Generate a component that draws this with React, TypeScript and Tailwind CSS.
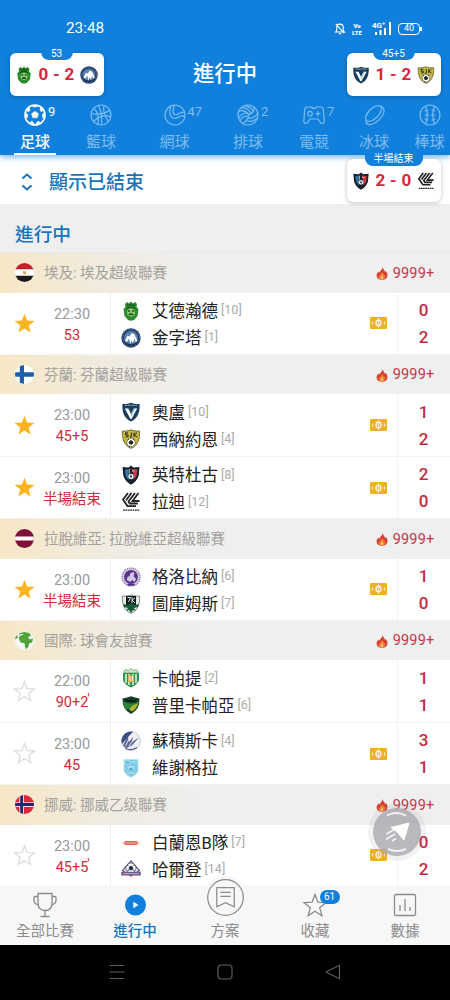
import React from 'react';

const STAR = 'M12 1.8l2.7 7.1 7.6.4-5.9 4.8 2 7.3-6.4-4.2-6.4 4.2 2-7.3L1.7 9.3l7.6-.4z';
const SHIELD = 'M10 .8 C7.5 2 4 2.2 1.4 2 C1 10 3 16.500 10 19.400 C17 16.500 19 10 18.600 2 C16 2.200 12.500 2 10 .8Z';

const crests: Record<string, React.ReactNode> = {
  eid: (
    <>
      <path d="M4 3l2-2 2 1.500L10 .6l2 1.900L14 1l2 2-.5 3 2 2-1 7-3.500 4-3 .7-3-.7L3.500 15l-1-7 2-2z" fill="#2b8a2a" />
      <path d="M6 4h8M5.500 7.500q4.500-3 9 0" stroke="#0f5216" strokeWidth="1.200" fill="none" />
      <circle cx="10" cy="11.500" r="4" fill="#8fc670" />
      <path d="M7 10h2M11 10h2M7.800 14q2.200-2 4.400 0" stroke="#14541a" strokeWidth="1.400" />
    </>
  ),
  pyramids: (
    <>
      <circle cx="10" cy="10" r="9.700" fill="#1f3a68" />
      <circle cx="10" cy="10" r="7" fill="#5f81ad" />
      <path d="M4 13L6.500 7.500l1.800 1L11 5l2.500 1.500L16 12v1.500h-1.700l-.8-3-1.500 4.500-1.500-2.500-1.200 3.500-1.300-5.500-2 3.500z" fill="#fff" />
      <path d="M3.500 13.500q6.500 5 13 0l-1 3-5.500 2.500-5.500-2.500z" fill="#1a3158" />
      <circle cx="10" cy="10" r="8.400" fill="none" stroke="#93a9c6" strokeWidth=".7" strokeDasharray="1 1" />
    </>
  ),
  oulu: (
    <>
      <path d={SHIELD} fill="#1b3d5c" />
      <path d="M4 3.400h12" stroke="#7d9bb0" strokeWidth="1.400" strokeDasharray="2 .6" />
      <path d="M3.800 6.500h3.500L10 12l2.700-5.500h3.500L10.500 17h-1z" fill="#fff" />
      <path d="M10 12l2.700-5.500h1.300L10 15z" fill="#6fb1c4" />
    </>
  ),
  sjk: (
    <>
      <path d={SHIELD} fill="#c3b73f" stroke="#58572d" strokeWidth=".8" />
      <path d="M7 3.800H4.500v2H7v2H4.500M10.300 3.500V8H8.800M13 3.500V8M16 3.700l-2.700 2L16 8" stroke="#24241c" strokeWidth="1" fill="none" />
      <circle cx="10" cy="13.500" r="4.200" fill="#fff" stroke="#333" strokeWidth=".5" />
      <path d="M10 11.500l2 1.500-.8 2H8.800L8 13zM6.500 11l1.500-1M13.500 11L12 10M8 17l1 .7" fill="#222" stroke="#222" strokeWidth=".9" />
    </>
  ),
  inter: (
    <>
      <path d="M10 .5L12.500 2.500l6-.5-.8 8.500Q16 16.500 10 19.700 4 16.500 2.300 10.500L1.500 2l6 .5z" fill="#17202b" />
      <path d="M3.800 4.800l3.700-.6v11l-2.700-4z" fill="#2f78ad" />
      <path d="M10.500 4l5.900.6-.9 6.400-3 4V9z" fill="#d03c42" />
      <path d="M8.300 4v4.500M11 6h2.500" stroke="#e9e9e9" strokeWidth=".8" fill="none" />
      <circle cx="10" cy="11.500" r="2.700" fill="#d5e6ee" />
      <path d="M9 10.500h2l-.3 1.900H9.300z" fill="#1c2631" />
    </>
  ),
  lahti: (
    <>
      <g stroke="#222" strokeWidth="1.800" fill="none">
        <path d="M7 1L2 7.500l4.500 6.600H15" />
        <path d="M10.500 1L5 8.300" />
        <path d="M14 1L7.500 9.500l1.300 2h8" />
        <path d="M17.500 1l-6 8h7" />
      </g>
      <path d="M2 18.200h16.500" stroke="#222" strokeWidth="1.300" strokeDasharray="1.800 .6" />
    </>
  ),
  grobina: (
    <>
      <circle cx="10" cy="10" r="9" fill="#d5cce2" stroke="#8468a8" strokeWidth="1.200" strokeDasharray="1.200 .8" />
      <circle cx="10" cy="10" r="6.900" fill="#57318a" />
      <path d="M5.500 13l1-3 2-1 1-3 3-1 1 2-1 2 2.500 3-1.500 3-2.500-2-1.500 2z" fill="#d5c8e4" />
      <path d="M6.500 17.800h7" stroke="#57318a" strokeWidth="1.800" />
    </>
  ),
  tukums: (
    <>
      <path d={SHIELD} fill="#e4ece7" stroke="#51665b" strokeWidth=".7" />
      <path d="M5 2h10v9.500H5z" fill="#111c17" />
      <path d="M6.500 3.500h3L7.500 8M11 3v6M14 4l-3 2 3 3" stroke="#d9e3dd" strokeWidth="1" fill="none" />
      <path d="M2 10l4 1 4-2 4 2 4-1-1 3-4 1 2 3-3-1-2 3-2-3-3 1 2-3-4-1z" fill="#175b3c" />
    </>
  ),
  karpaty: (
    <>
      <path d="M3 3l2-1.500L7.500 2.500 10 .5l2.500 2L15 1.500 17 3v2H3z" fill="#cfe3c3" stroke="#5c9d5b" strokeWidth=".7" />
      <path d="M2 5h16v7q-1.500 5-8 7.500Q3.500 17 2 12z" fill="#2d9453" />
      <path d="M5 6v9M8 6v11M12 6v11M15 6v9" stroke="#f2f4e4" strokeWidth="1.500" />
      <path d="M7.300 7h5.500v7H7.300z" fill="#e3a735" />
      <path d="M9 8v5M11.500 8v5" stroke="#fff" strokeWidth=".9" />
    </>
  ),
  prykarpattia: (
    <>
      <path d="M1.500 3.500Q6 2.500 10 1.200 14 2.500 18.500 3.500 19 14.500 10 19 1 14.500 1.500 3.500z" fill="#12402a" />
      <path d="M2 6q8 5 16 0l-.5 3q-7 3-12 6Q2 11 2 6z" fill="#2f7f34" />
      <path d="M8 14.500q3-5 9-6-1 5-6 8z" fill="#a9b92f" />
      <path d="M4 5.500l12 .5" stroke="#0c2417" strokeWidth="2.200" />
    </>
  ),
  suceska: (
    <>
      <circle cx="10" cy="10" r="9.500" fill="#eef0f4" stroke="#a9b0c3" strokeWidth=".6" />
      <path d="M12 .8A9.500 9.500 0 0 0 1 13L8 5z" fill="#3b4a83" />
      <path d="M2 14.500L7 5l1 6 4-5-1 5 7-4.500-6 7.500-7 3z" fill="#56648f" />
      <path d="M4.500 15l4.500-9M8 15l5-7M11 14.500l6-6" stroke="#fff" strokeWidth=".9" />
      <path d="M4 17q6 3.500 12-.5" stroke="#56648f" strokeWidth="1.200" fill="none" />
    </>
  ),
  visegrad: (
    <>
      <path d="M3 1.500h14V13q-2 4.500-7 6.300Q5 17.500 3 13z" fill="#7ecbe6" stroke="#b5e3f2" strokeWidth=".8" />
      <path d="M4 3h5v3H4zM11 4h5M6 9h8M7 12l3-4 3 4M6 15h8" stroke="#c3eaf6" strokeWidth=".9" fill="#4fadd0" />
    </>
  ),
  brann: (
    <>
      <path d="M.3 10L4 7.800h12l3.700 2.200L16 12.200H4z" fill="#f7c8c2" />
      <rect x="3.500" y="8" width="13" height="4" rx="2" fill="#e2675d" />
      <path d="M5.500 10h9" stroke="#fbdedb" strokeWidth="1.200" strokeDasharray="1.200 .7" />
    </>
  ),
  harstad: (
    <>
      <path d="M10 .8l8.500 9.700L10 16 1.500 10.500z" fill="#e9e6f1" stroke="#605b8a" strokeWidth="1.200" />
      <circle cx="10" cy="8" r="5" fill="#fff" stroke="#383957" strokeWidth=".7" />
      <path d="M10 6l2 1.500-.8 2.300H8.800L8 7.500zM6 5l1.500.3M14 5l-1.500.3M6.500 10.500L8 10M13.500 10.500L12 10" fill="#2b2b48" stroke="#2b2b48" strokeWidth="1" />
      <path d="M.3 11.800h19.400v3.700H.3z" fill="#575a94" />
      <path d="M2 13.600h16" stroke="#e98597" strokeWidth="1.400" />
    </>
  ),
};

const Crest = ({ id, className = 'size-5' }: { id: string; className?: string }) => (
  <svg viewBox="0 0 20 20" className={`${className} shrink-0`}>
    {crests[id]}
  </svg>
);

const flags: Record<string, React.ReactNode> = {
  egypt: (
    <>
      <path d="M0 0h20v20H0z" fill="#fff" />
      <path d="M0 0h20v6.700H0z" fill="#c51f2b" />
      <path d="M0 13.300h20V20H0z" fill="#1d1719" />
      <path d="M8.500 8.500L10 9l1.500-.5v3h-3z" fill="#d2a548" />
    </>
  ),
  finland: (
    <>
      <path d="M0 0h20v20H0z" fill="#fff" />
      <path d="M5 0h4.500v20H5zM0 7.700h20v4.600H0z" fill="#1a5fa8" />
    </>
  ),
  latvia: (
    <>
      <path d="M0 0h20v20H0z" fill="#7d1236" />
      <path d="M0 8h20v4H0z" fill="#fff" />
    </>
  ),
  world: (
    <>
      <path d="M0 0h20v20H0z" fill="#f4f7f5" />
      <path d="M5 2l5-1 5 1 2 3-3 1 1 3 4-1-1 4-3 1-1 4-3 2-1-6-4-1-2-4 1-3 4-1-1-1-4 1zM0 5l2-1 1 3-3 2z" fill="#4fa338" />
    </>
  ),
  norway: (
    <>
      <path d="M0 0h20v20H0z" fill="#e0263b" />
      <path d="M4.500 0h5v20h-5zM0 7.500h20v5H0z" fill="#f4dfe4" />
      <path d="M5.500 0h3v20h-3zM0 8.500h20v3H0z" fill="#20286b" />
    </>
  ),
};

const Flag = ({ id }: { id: string }) => (
  <svg viewBox="0 0 20 20" className="size-[19px] shrink-0 rounded-full">
    {flags[id]}
  </svg>
);

const Fire = () => (
  <svg viewBox="0 0 14 16" className="mb-px h-[15px] w-3">
    <path d="M7.500.5c.5 3 3 3.500 3 6l1.200-1.500c1.300 2 2 3.600 1.600 6C12.700 14 10 15.500 7 15.500S1 14 .7 11C.5 8.500 1.700 7 2.600 5.700l1 1.800C4.500 5 7.500 4 7.500.5z" fill="#d8402f" />
    <path d="M7.300 6c.2 2 2.200 2.600 2.200 4.200l1-1c.8 3.500-1 6-3.500 6s-4.500-1.700-4-4.700l1.300.8C4.500 9 7 8.500 7.300 6z" fill="#f0813a" />
    <path d="M7 10c1.500 1.800 1.600 4.500 0 5-1.700-.3-2-3 0-5z" fill="#f8c968" />
  </svg>
);

const Ticket = () => (
  <svg viewBox="0 0 17 12" className="h-3 w-[17px]">
    <rect width="17" height="12" rx="1" fill="#f1b01d" />
    <path d="M8.500 1.200v9.600M2.500 4.500v3M14.500 4.500v3" stroke="#fff2cc" strokeWidth="1.200" />
    <ellipse cx="8.500" cy="6" rx="2.400" ry="2.700" fill="#f1b01d" stroke="#fff5dc" strokeWidth="1.500" />
    <path d="M8.500 4.500v3" stroke="#fff5dc" />
  </svg>
);

type Team = { name: string; rank?: number; crest: string; score: number };
type Match = { time: string; status: string; tick?: boolean; star?: boolean; ticket?: boolean; teams: Team[] };
type League = { flag: string; name: string; matches: Match[] };

const leagues: League[] = [
  {
    flag: 'egypt',
    name: '埃及: 埃及超级聯賽',
    matches: [
      { time: '22:30', status: '53', star: true, ticket: true, teams: [
        { name: '艾德瀚德', rank: 10, crest: 'eid', score: 0 },
        { name: '金字塔', rank: 1, crest: 'pyramids', score: 2 },
      ] },
    ],
  },
  {
    flag: 'finland',
    name: '芬蘭: 芬蘭超級聯賽',
    matches: [
      { time: '23:00', status: '45+5', star: true, ticket: true, teams: [
        { name: '奧盧', rank: 10, crest: 'oulu', score: 1 },
        { name: '西納約恩', rank: 4, crest: 'sjk', score: 2 },
      ] },
      { time: '23:00', status: '半場結束', star: true, ticket: true, teams: [
        { name: '英特杜古', rank: 8, crest: 'inter', score: 2 },
        { name: '拉迪', rank: 12, crest: 'lahti', score: 0 },
      ] },
    ],
  },
  {
    flag: 'latvia',
    name: '拉脫維亞: 拉脫維亞超級聯賽',
    matches: [
      { time: '23:00', status: '半場結束', star: true, ticket: true, teams: [
        { name: '格洛比納', rank: 6, crest: 'grobina', score: 1 },
        { name: '圖庫姆斯', rank: 7, crest: 'tukums', score: 0 },
      ] },
    ],
  },
  {
    flag: 'world',
    name: '國際: 球會友誼賽',
    matches: [
      { time: '22:00', status: '90+2', tick: true, teams: [
        { name: '卡帕提', rank: 2, crest: 'karpaty', score: 1 },
        { name: '普里卡帕亞', rank: 6, crest: 'prykarpattia', score: 1 },
      ] },
      { time: '23:00', status: '45', ticket: true, teams: [
        { name: '蘇積斯卡', rank: 4, crest: 'suceska', score: 3 },
        { name: '維謝格拉', crest: 'visegrad', score: 1 },
      ] },
    ],
  },
  {
    flag: 'norway',
    name: '挪威: 挪威乙级聯賽',
    matches: [
      { time: '23:00', status: '45+5', tick: true, ticket: true, teams: [
        { name: '白蘭恩B隊', rank: 7, crest: 'brann', score: 0 },
        { name: '哈爾登', rank: 14, crest: 'harstad', score: 2 },
      ] },
    ],
  },
];

const MatchRow = ({ match }: { match: Match }) => (
  <div className="flex h-[62.5px] border-b border-[#f3f3f3] bg-white">
    <div className="flex w-12 items-center justify-center">
      <svg viewBox="0 0 24 24" className="size-[23px]">
        <path d={STAR} fill={match.star ? '#fcb322' : 'none'} stroke={match.star ? 'none' : '#dcdcdc'} strokeWidth="1.300" />
      </svg>
    </div>
    <div className="flex w-[63px] flex-col items-center border-r border-[#efefef] pt-[11px] pr-[14px] text-[14.500px] leading-[21px]">
      <span className="whitespace-nowrap text-[#999]">{match.time}</span>
      <span className="relative whitespace-nowrap text-[#cf2840]">
        {match.status}
        {match.tick && <span className="absolute -top-[3px] left-full -ml-px text-[14px]">'</span>}
      </span>
    </div>
    <div className="flex flex-1 flex-col pt-[4.500px] pl-2.5">
      {match.teams.map((team) => (
        <div key={team.name} className="flex h-[27px] items-center">
          <Crest id={team.crest} />
          <span className="ml-[11px] pt-[3px] text-[16.500px] whitespace-nowrap text-[#222]">{team.name}</span>
          {team.rank && <span className="ml-[3px] text-[12.500px] text-[#aaa]">[{team.rank}]</span>}
        </div>
      ))}
    </div>
    <div className="flex w-[37px] items-center justify-center">{match.ticket && <Ticket />}</div>
    <div className="flex w-[53px] flex-col items-center border-l border-[#f3f3f3] pt-[4.500px] pr-px text-[17px] leading-[27px] font-medium text-[#c32b3f]">
      {match.teams.map((team) => (
        <span key={team.name}>{team.score}</span>
      ))}
    </div>
  </div>
);

const LeagueBlock = ({ league }: { league: League }) => (
  <section>
    <div className="flex h-[39.250px] items-center bg-[linear-gradient(90deg,#f7e7c6_0px,#f1ebdf_100px,#efefef_200px)] pr-[15.500px] pl-[15px]">
      <Flag id={league.flag} />
      <span className="ml-2.5 pt-[3px] text-[14.500px] text-[#a3a19d]">{league.name}</span>
      <span className="ml-auto flex items-center gap-[5px] pt-[2px] text-[14.500px] tracking-[0.200px] text-[#c7354a]">
        <Fire />
        9999+
      </span>
    </div>
    {league.matches.map((match, i) => (
      <MatchRow key={i} match={match} />
    ))}
  </section>
);

const ScoreCard = ({ label, home, away, score, wide }: { label: string; home: string; away: string; score: string; wide?: boolean }) => (
  <div className="relative flex h-[43px] w-[94px] items-center justify-between rounded-[6px] bg-white px-[5.500px] shadow-[0_1px_4px_rgba(0,0,0,0.25)]">
    <div className={`absolute left-1/2 flex -translate-x-1/2 justify-center rounded-b-[8px] bg-[#1080dc] text-[10px] text-white ${wide ? '-top-[8px] h-[15px] w-[58px] leading-[15px]' : label.length > 2 ? '-top-[7px] h-[14px] w-[42px] leading-[15px]' : '-top-[7px] h-[14px] w-[32px] leading-[15px]'}`}>
      <span className="whitespace-nowrap">{label}</span>
    </div>
    <Crest id={home} className="size-[18px]" />
    <span className="text-[17px] font-bold tracking-[0.300px] whitespace-nowrap text-[#d6283d]">{score}</span>
    <Crest id={away} className="size-[18px]" />
  </div>
);

const sports = [
  {
    name: '足球', count: 9, width: 'w-[70px]',
    icon: (
      <>
        <circle cx="11" cy="11" r="10" strokeWidth="1.600" />
        <path d="M11 7.300l3.500 2.500-1.300 4H8.800l-1.300-4zM7.500 1.700L11 3.300l3.500-1.600L11 1zM1.500 9l2.200 1.400L3.300 14l-1.600-1zM20.500 9l-2.200 1.400.4 3.600 1.600-1zM6 18.500L8 17l2.500 3.500-3-.6zM16 18.500L14 17l-2.500 3.500 3-.6zM3 4.500L5.500 4 6 6.500 4 8zM19 4.500L16.500 4 16 6.500 18 8z" fill="currentColor" strokeWidth=".5" />
      </>
    ),
  },
  {
    name: '籃球', width: 'w-[62px]',
    icon: (
      <>
        <circle cx="11" cy="11" r="10" />
        <path d="M8.500 1.300q4 9 3 19.600M1.300 9.500q10 2.500 18.700-3.500M3.500 4q6 5 4.500 16.500M20.700 13q-9-4-17 4.500M14 1.500Q12 8 18.500 17.500" />
      </>
    ),
  },
  {
    name: '網球', count: 47, width: 'w-[85px]',
    icon: (
      <>
        <circle cx="11" cy="11" r="10" />
        <path d="M7 1.900C4.500 6.500 5.500 14 10.500 14.500c3.500.3 4.500-3.500 10.300-2.500M10.500 1C8.500 5 8.300 10.500 11.500 11c2.500.3 4.500-3 8.300-2.800" />
      </>
    ),
  },
  {
    name: '排球', count: 2, width: 'w-[62px]',
    icon: (
      <>
        <circle cx="11" cy="11" r="10" />
        <path d="M12 10.500Q7 5 1.800 7.500M12 10.500q-1 6-6.500 9M12 10.500Q17.500 9 17 3.200M4.500 4Q11 3.500 14 9.300M8 1.700q6 1 8.500 6M20.800 9q-3 5.500-10 5.500M20 14.500q-4.500 4-10.500 2.500M1.500 14Q5 9 10 9M3 17q2-5 8-5" />
      </>
    ),
  },
  {
    name: '電競', count: 7, width: 'w-[70px]',
    icon: (
      <>
        <path d="M4.500 3h4.300l.8 1.300h2.800L13.200 3h4.300q2.500 0 2.800 2.500l.9 11.500q0 2.500-1.800 2.500t-2.700-2L15 15H7l-1.700 2.500q-.9 2-2.700 2T.8 17l.9-11.500Q2 3 4.500 3z" />
        <circle cx="7" cy="9.700" r="2.300" />
        <path d="M12.500 9.700h5M15 7.200v5" />
      </>
    ),
  },
  {
    name: '冰球', width: 'w-[50px]',
    icon: (
      <>
        <ellipse cx="10.500" cy="9.500" rx="10" ry="5" transform="rotate(-45 10.500 9.500)" />
        <path d="M3 16.500v1.500q1 3.500 5.500 2.500c5.500-1.500 12-8.500 12.500-13q.2-2.500-1.500-4.500L17.500 2" />
      </>
    ),
  },
  {
    name: '棒球', width: 'w-[61px]',
    icon: (
      <>
        <circle cx="11" cy="11" r="10" />
        <path d="M6.500 2q3.500 9 0 18M15.500 2q-3.500 9 0 18M5.500 7l4-1M5.500 11H10M5.500 15l4 1M16.500 7l-4-1M16.500 11H12M16.500 15l-4 1" />
      </>
    ),
  },
];

const navItems = [
  {
    name: '全部比賽',
    icon: <path d="M7 2.500h14V12q0 7.500-7 7.500T7 12zM7 5.500H4q-1 0-1 1V9q0 4 4.500 5M21 5.500h3q1 0 1 1V9q0 4-4.500 5M14 19.500v5.500M9.500 25.500h9" />,
  },
  {
    name: '進行中', active: true,
    icon: (
      <>
        <circle cx="14.500" cy="14" r="10.500" fill="#1080dc" stroke="none" />
        <path d="M12.300 10.800l5.200 3.200-5.200 3.200z" fill="#fff" stroke="none" />
      </>
    ),
  },
  { name: '方案' },
  {
    name: '收藏', badge: 61,
    icon: <path d="M14 3.500l2.900 7.700 8.100.4-6.300 5.200 2.200 8-6.900-4.600-6.900 4.600 2.200-8L3 11.600l8.100-.4z" />,
  },
  {
    name: '數據',
    icon: (
      <>
        <rect x="3.500" y="3.500" width="21" height="21" rx="1.500" />
        <path d="M9 20v-6M14 20V8M19 20v-4" />
      </>
    ),
  },
];

const StatusBar = () => (
  <div className="flex h-[45px] items-center pt-3 pr-[28px] pl-[66px] text-white">
    <span className="pt-px text-[15.300px]">23:48</span>
    <div className="ml-auto flex items-center">
      <svg viewBox="0 0 12 14" className="h-[13px] w-3" fill="none" stroke="currentColor" strokeWidth="1.200">
        <path d="M2.500 9.500V6q0-3.500 3.500-3.700Q9.500 2.500 9.500 6v3.500l1.300 1.300H1.200zM4.800 12.500h2.400M1.500 2l9 10" />
      </svg>
      <span className="ml-[6px] flex w-[10px] flex-col items-center text-[6px] leading-[7px] font-black">
        <span>Vo</span>
        <span>LTE</span>
      </span>
      <svg viewBox="0 0 20 15" className="ml-[10px] h-[15px] w-5" fill="currentColor">
        <text x="0" y="7" fontSize="8" fontWeight="700">4G⁺</text>
        <path d="M3 11h2v3H3zM7.500 9h2v5h-2zM12 7h2v7h-2zM17 1h2v13h-2z" />
      </svg>
      <span className="ml-[6px] flex h-3 w-[22px] items-center justify-center rounded-[4px] border border-white text-[9px] leading-none">40</span>
      <span className="h-1 w-[2px] bg-white" />
    </div>
  </div>
);

export default function App() {
  return (
    <div className="relative flex h-[1000px] w-[450px] flex-col overflow-hidden bg-[#efefef] font-[Roboto,'Noto_Sans_CJK_TC',sans-serif] leading-none">
      <header className="relative z-10 h-[155px] shrink-0 bg-[#1080dc] text-white shadow-[0_2px_6px_rgba(16,128,220,0.600)]">
        <StatusBar />
        <h1 className="h-[57px] pt-[14px] text-center text-[21.300px] leading-[30px] font-medium">進行中</h1>
        <nav className="flex">
          {sports.map((sport, i) => (
            <div key={sport.name} className={`${sport.width} flex h-[53px] shrink-0 flex-col items-center ${i === 0 ? '' : 'text-[#7ebcf0]'}`}>
              <div className="relative mt-[2px]">
                <svg viewBox="0 0 22 22" className="size-[22px]" fill="none" stroke="currentColor" strokeWidth="1.200">
                  {sport.icon}
                </svg>
                {sport.count && <span className="absolute top-0 left-full ml-[2px] text-[13px] leading-[15px]">{sport.count}</span>}
              </div>
              <span className={`mt-[7px] text-[15px] leading-[18px] ${i === 0 ? 'font-medium' : ''}`}>{sport.name}</span>
              {i === 0 && <div className="mt-[2px] h-[2px] w-[42px] bg-white" />}
            </div>
          ))}
        </nav>
      </header>

      <div className="flex h-[49px] shrink-0 items-center bg-white pt-[4px] pl-[21px] text-[#1873bb]">
        <svg viewBox="0 0 12 18" className="h-[18px] w-3" fill="none" stroke="currentColor" strokeWidth="2">
          <path d="M1.500 5.500L6 1.500l4.500 4M1.500 12.500l4.500 4 4.500-4" />
        </svg>
        <span className="ml-4 pt-[2px] text-[19px] font-medium">顯示已結束</span>
      </div>
      <h2 className="h-[49.300px] shrink-0 border-b border-[#e8e8e8] pt-[17px] pl-[15px] text-[18.700px] leading-[28px] font-medium text-[#1873bb]">進行中</h2>

      <main className="h-[633.700px] shrink-0">
        {leagues.map((league) => (
          <LeagueBlock key={league.name} league={league} />
        ))}
      </main>

      <nav className="flex h-[58px] shrink-0 bg-[#f7f7f7]">
        {navItems.map((item) => (
          <div key={item.name} className={`relative flex w-[90px] flex-col items-center ${item.active ? 'text-[#1873bb]' : 'text-[#8b8b8b]'}`}>
            {item.icon ? (
              <svg viewBox="0 0 28 28" className="mt-[4px] size-7" fill="none" stroke="currentColor" strokeWidth="1.300">
                {item.icon}
              </svg>
            ) : (
              <div className="-mt-[11px] flex h-[43px] w-[46px] justify-center rounded-t-full bg-[#f7f7f7] pt-[3px]">
                <svg viewBox="0 0 36 36" className="size-[37px]" fill="none" stroke="currentColor" strokeWidth="1.200">
                  <circle cx="18" cy="18" r="17.300" />
                  <path d="M9.500 8.500h17v18.500L18 23l-8.500 4zM13 13h10M13 17h10" />
                </svg>
              </div>
            )}
            <span className={`absolute top-[36.500px] text-[14.500px] leading-[18px] whitespace-nowrap ${item.active ? 'font-medium' : ''}`}>{item.name}</span>
            {item.badge && (
              <span className="absolute top-[3px] left-[49.500px] flex h-[14px] w-5 items-center justify-center rounded-full bg-[#1080dc] text-[10px] text-white">
                {item.badge}
              </span>
            )}
          </div>
        ))}
      </nav>

      <div className="flex h-[55px] shrink-0 justify-between bg-black px-[109px]">
        <svg viewBox="0 0 16 16" className="mt-[19.500px] size-4" fill="none" stroke="#5c5c5c" strokeWidth="1.200">
          <path d="M.5 1.500h15M.5 8h15M.5 14.500h15" />
        </svg>
        <svg viewBox="0 0 16 16" className="mt-[19.500px] size-4" fill="none" stroke="#5c5c5c" strokeWidth="1.200">
          <rect x="1" y="1" width="14" height="14" rx="3.500" />
        </svg>
        <svg viewBox="0 0 16 16" className="mt-[19.500px] size-4" fill="none" stroke="#5c5c5c" strokeWidth="1.200" strokeLinejoin="round">
          <path d="M14.500 1.200v13.600L1 8z" />
        </svg>
      </div>

      {/* pinned scores */}
      <div className="absolute top-[53px] left-[9.500px] z-20">
        <ScoreCard label="53" home="eid" away="pyramids" score="0 - 2" />
      </div>
      <div className="absolute top-[53px] left-[346.500px] z-20">
        <ScoreCard label="45+5" home="oulu" away="sjk" score="1 - 2" />
      </div>
      <div className="absolute top-[159px] left-[346.500px] z-20">
        <ScoreCard label="半場結束" home="inter" away="lahti" score="2 - 0" wide />
      </div>

      {/* floating button */}
      <div className="absolute top-[803px] left-[368px] flex size-[58px] items-center justify-center rounded-full bg-[#808088]/10">
        <svg viewBox="0 0 48 48" className="size-12">
          <circle cx="24" cy="24" r="24" fill="#acacb1" fillOpacity=".82" />
          <path d="M36 15L18 19.500l5.500 4L31 32z" fill="#fff" stroke="#fff" strokeWidth="1" strokeLinejoin="round" />
          <path d="M13.500 26l7-4M13 31.500l9-5.500M19 33l4-2.500M14 7.500q9-5 19 0M15 41q9 4 18 0" stroke="#f1f1f2" strokeWidth="2" fill="none" />
        </svg>
      </div>
    </div>
  );
}
